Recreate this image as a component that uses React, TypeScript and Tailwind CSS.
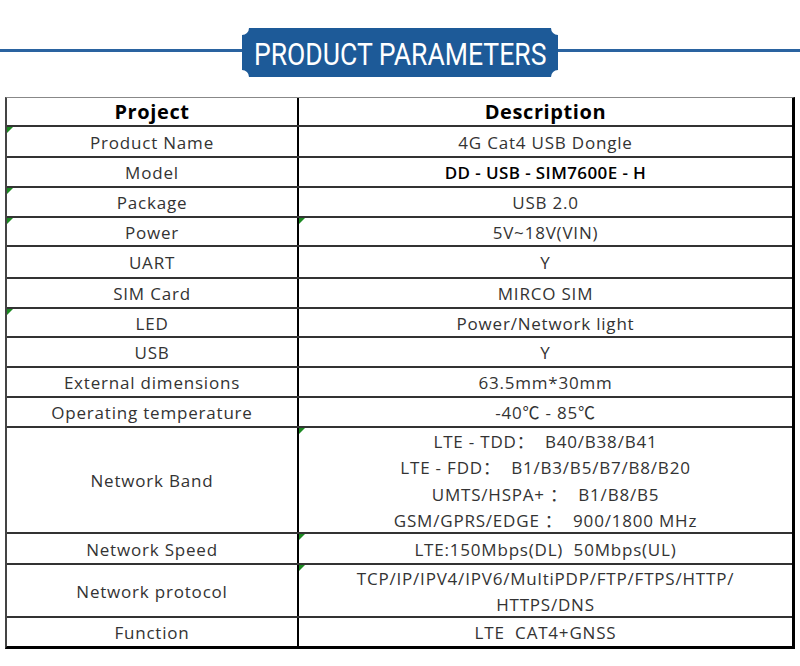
const rows: { label: string; value: string[]; h: string; bold?: boolean; markL?: boolean; markR?: boolean }[] = [
  { label: "Product Name", value: ["4G Cat4 USB Dongle"], h: "h-[31px]", markL: true },
  { label: "Model", value: ["DD - USB - SIM7600E - H"], h: "h-[30px]", bold: true },
  { label: "Package", value: ["USB 2.0"], h: "h-[30px]", markL: true },
  { label: "Power", value: ["5V~18V(VIN)"], h: "h-[29px]", markL: true, markR: true },
  { label: "UART", value: ["Y"], h: "h-[32px]" },
  { label: "SIM Card", value: ["MIRCO SIM"], h: "h-[30px]" },
  { label: "LED", value: ["Power/Network light"], h: "h-[29px]", markL: true },
  { label: "USB", value: ["Y"], h: "h-[30px]" },
  { label: "External dimensions", value: ["63.5mm*30mm"], h: "h-[30px]" },
  { label: "Operating temperature", value: ["-40℃ - 85℃"], h: "h-[30px]" },
  {
    label: "Network Band",
    value: [
      "LTE - TDD：  B40/B38/B41",
      "LTE - FDD：  B1/B3/B5/B7/B8/B20",
      "UMTS/HSPA+ ：  B1/B8/B5",
      "GSM/GPRS/EDGE ：  900/1800 MHz",
    ],
    h: "h-[106px]",
    markR: true,
  },
  { label: "Network Speed", value: ["LTE:150Mbps(DL)  50Mbps(UL)"], h: "h-[31px]", markR: true },
  { label: "Network protocol", value: ["TCP/IP/IPV4/IPV6/MultiPDP/FTP/FTPS/HTTP/", "HTTPS/DNS"], h: "h-[53px]", markR: true },
  { label: "Function", value: ["LTE  CAT4+GNSS"], h: "h-[28px]" },
];

function Mark() {
  return (
    <span className="absolute left-0 top-0 h-0 w-0 border-t-[6px] border-r-[6px] border-t-[#1c8a22] border-r-transparent" />
  );
}

function Banner() {
  return (
    <div className="relative h-[49px] w-[316px] shrink-0">
      <svg className="absolute inset-0" width="316" height="49" viewBox="0 0 316 49">
        <path
          d="M7 0 H309 A7 7 0 0 0 316 7 V42 A7 7 0 0 0 309 49 H7 A7 7 0 0 0 0 42 V7 A7 7 0 0 0 7 0 Z"
          fill="#1d5a98"
        />
      </svg>
      <div className="relative flex h-full items-center justify-center">
        <span className="scale-x-[0.83] whitespace-nowrap pt-[2px] font-['Roboto',sans-serif] text-[32px] leading-none text-white">
          PRODUCT PARAMETERS
        </span>
      </div>
    </div>
  );
}

export default function App() {
  return (
    <div className="h-[666px] w-[800px] bg-white font-['Open_Sans','Noto_Sans_CJK_SC',sans-serif] text-[#333]">
      <div className="flex items-start pt-[28px]">
        <div className="mt-[21px] h-[3px] flex-1 bg-[#2a63a0]" />
        <Banner />
        <div className="mt-[21px] h-[3px] flex-1 bg-[#2a63a0]" />
      </div>

      <div className="ml-[5px] mt-[20px] w-[790px] border-t border-b-[3px] border-l-2 border-r-[3px] border-t-[#888] border-b-black border-l-[#444] border-r-black">
        <div className="flex h-[29px] border-b-2 border-[#333] text-[20px] font-bold tracking-[0.6px] text-black">
          <div className="flex w-[292px] items-center justify-center border-r-2 border-black">Project</div>
          <div className="flex flex-1 items-center justify-center">Description</div>
        </div>
        {rows.map((r, i) => (
          <div
            key={r.label}
            className={`flex ${r.h} text-[17px] tracking-[0.8px] ${i < rows.length - 1 ? "border-b-2 border-[#333]" : ""}`}
          >
            <div className="relative flex w-[292px] items-center justify-center border-r-2 border-black pt-[2px]">
              {r.markL && <Mark />}
              {r.label}
            </div>
            <div
              className={`relative flex flex-1 flex-col items-center justify-center pt-[3px] leading-[26.5px] ${
                r.bold ? "font-semibold tracking-[0.4px] text-black" : ""
              }`}
            >
              {r.markR && <Mark />}
              {r.value.map((v) => (
                <span key={v} className="whitespace-pre">
                  {v}
                </span>
              ))}
            </div>
          </div>
        ))}
      </div>
    </div>
  );
}
